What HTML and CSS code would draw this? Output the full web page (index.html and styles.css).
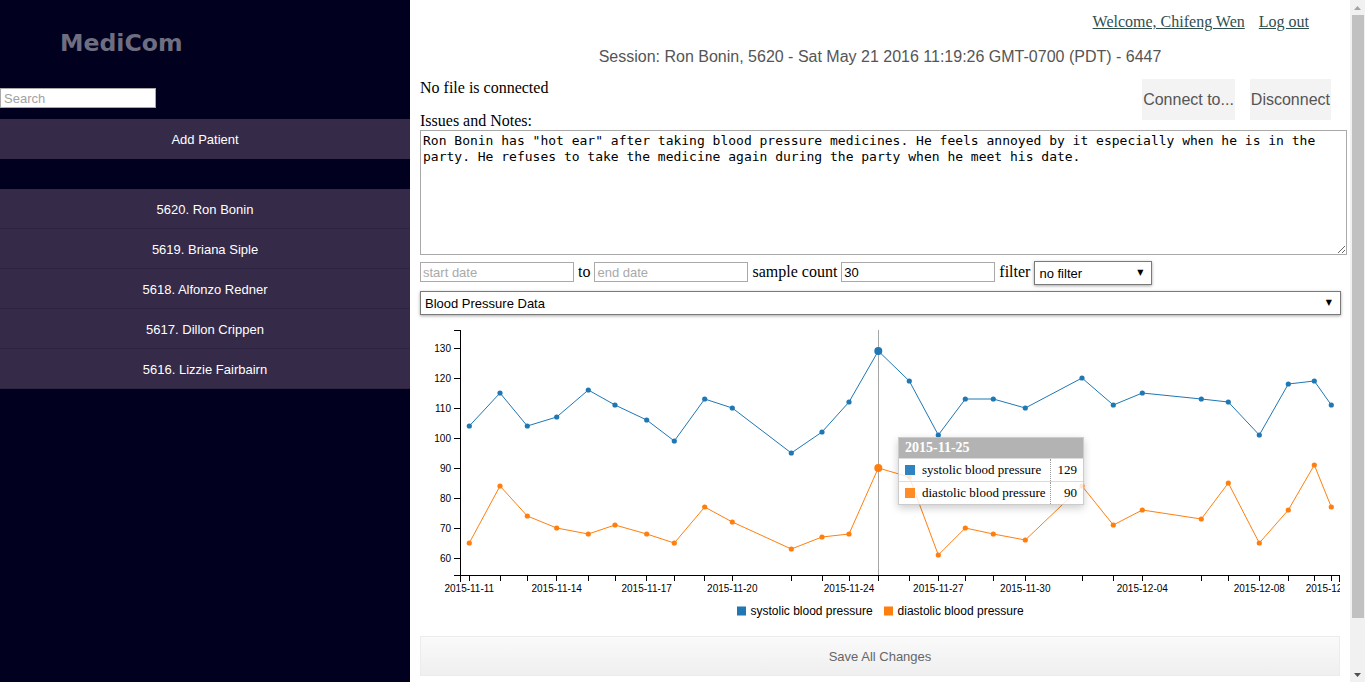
FILE: index.html
```html
<!DOCTYPE html>
<html lang="en">
<head>
<meta charset="utf-8">
<title>MediCom</title>
<link rel="stylesheet" href="styles.css">
</head>
<body>
<div class="app">
  <aside class="sidebar">
    <div class="brand">MediCom</div>
    <input class="search" type="text" placeholder="Search">
    <div class="add-patient">Add Patient</div>
    <ul class="patients">
      <li>5620. Ron Bonin</li>
      <li>5619. Briana Siple</li>
      <li>5618. Alfonzo Redner</li>
      <li>5617. Dillon Crippen</li>
      <li>5616. Lizzie Fairbairn</li>
    </ul>
  </aside>

  <main class="main">
    <div class="topbar">
      <a href="#" class="toplink">Welcome, Chifeng Wen</a><a href="#" class="toplink">Log out</a>
    </div>
    <div class="session">Session: Ron Bonin, 5620 - Sat May 21 2016 11:19:26 GMT-0700 (PDT) - 6447</div>

    <div class="file-row">
      <div class="file-actions">
        <button class="file-btn">Connect to...</button>
        <button class="file-btn">Disconnect</button>
      </div>
      <div class="file-status">No file is connected</div>
    </div>
    <div class="notes-label">Issues and Notes:</div>
    <textarea class="notes">Ron Bonin has "hot ear" after taking blood pressure medicines. He feels annoyed by it especially when he is in the party. He refuses to take the medicine again during the party when he meet his date.</textarea>

    <div class="filters">
      <input class="field" type="text" placeholder="start date">
      <span class="filter-text">to</span>
      <input class="field" type="text" placeholder="end date">
      <span class="filter-text">sample count</span>
      <input class="field" type="text" value="30">
      <span class="filter-text">filter</span>
      <span class="select select-small"><select><option>no filter</option></select></span>
    </div>

    <div class="dataset">
      <span class="select select-wide"><select><option>Blood Pressure Data</option></select></span>
    </div>

    <div class="chart">
      <svg class="chart-svg" width="920" height="300" viewBox="0 0 920 300">
        <g class="axis" stroke="#000" fill="none" shape-rendering="crispEdges">
          <path d="M34,10.5H40.5V255.5H34"/>
          <path d="M34,28.5H40 M34,58.5H40 M34,88.5H40 M34,118.5H40 M34,148.5H40 M34,178.5H40 M34,208.5H40 M34,238.5H40"/>
          <path d="M40.5,261.5V255.5H919.5V261.5"/>
          <path d="M49.5,255V261 M80.5,255V261 M107.5,255V261 M136.5,255V261 M168.5,255V261 M195.5,255V261 M226.5,255V261 M254.5,255V261 M284.5,255V261 M312.5,255V261 M371.5,255V261 M402.5,255V261 M429.5,255V261 M458.5,255V261 M489.5,255V261 M518.5,255V261 M545.5,255V261 M573.5,255V261 M605.5,255V261 M662.5,255V261 M693.5,255V261 M722.5,255V261 M781.5,255V261 M808.5,255V261 M839.5,255V261 M868.5,255V261 M894.5,255V261 M911.5,255V261"/>
        </g>
        <g class="tick-text" text-anchor="end">
          <text x="31" y="31.7">130</text>
          <text x="31" y="61.7">120</text>
          <text x="31" y="91.7">110</text>
          <text x="31" y="121.7">100</text>
          <text x="31" y="151.7">90</text>
          <text x="31" y="181.7">80</text>
          <text x="31" y="211.7">70</text>
          <text x="31" y="241.7">60</text>
        </g>
        <g class="tick-text" text-anchor="middle">
          <text x="49.3" y="272">2015-11-11</text>
          <text x="136.7" y="272">2015-11-14</text>
          <text x="226.7" y="272">2015-11-17</text>
          <text x="312.3" y="272">2015-11-20</text>
          <text x="429" y="272">2015-11-24</text>
          <text x="518.3" y="272">2015-11-27</text>
          <text x="605.3" y="272">2015-11-30</text>
          <text x="722.3" y="272">2015-12-04</text>
          <text x="839.3" y="272">2015-12-08</text>
          <text x="911.3" y="272">2015-12-10</text>
        </g>

        <line x1="458.5" y1="10" x2="458.5" y2="255" stroke="#a6a6a6" stroke-width="1" shape-rendering="crispEdges"/>

        <polyline fill="none" stroke="#1f77b4" stroke-width="1" points="49.3,106 80,73 107.3,106 136.7,97 168.3,70 195,85 226.7,100 254.3,121 284.7,79 312.3,88 371.3,133 402,112 429,82 458.3,31 489.3,61 518.3,115 545.3,79 573.3,79 605.3,88 662,58 693.3,85 722.3,73 781.3,79 808.3,82 839.3,115 868.3,64 894.3,61 911.3,85"/>
        <polyline fill="none" stroke="#ff7f0e" stroke-width="1" points="49.3,223 80,166 107.3,196 136.7,208 168.3,214 195,205 226.7,214 254.3,223 284.7,187 312.3,202 371.3,229 402,217 429,214 458.3,148 489.3,157 518.3,235 545.3,208 573.3,214 605.3,220 662,166 693.3,205 722.3,190 781.3,199 808.3,163 839.3,223 868.3,190 894.3,145 911.3,187"/>

        <g fill="#1f77b4">
          <circle cx="49.3" cy="106" r="2.6"/><circle cx="80" cy="73" r="2.6"/><circle cx="107.3" cy="106" r="2.6"/><circle cx="136.7" cy="97" r="2.6"/><circle cx="168.3" cy="70" r="2.6"/><circle cx="195" cy="85" r="2.6"/><circle cx="226.7" cy="100" r="2.6"/><circle cx="254.3" cy="121" r="2.6"/><circle cx="284.7" cy="79" r="2.6"/><circle cx="312.3" cy="88" r="2.6"/><circle cx="371.3" cy="133" r="2.6"/><circle cx="402" cy="112" r="2.6"/><circle cx="429" cy="82" r="2.6"/><circle cx="458.3" cy="31" r="4"/><circle cx="489.3" cy="61" r="2.6"/><circle cx="518.3" cy="115" r="2.6"/><circle cx="545.3" cy="79" r="2.6"/><circle cx="573.3" cy="79" r="2.6"/><circle cx="605.3" cy="88" r="2.6"/><circle cx="662" cy="58" r="2.6"/><circle cx="693.3" cy="85" r="2.6"/><circle cx="722.3" cy="73" r="2.6"/><circle cx="781.3" cy="79" r="2.6"/><circle cx="808.3" cy="82" r="2.6"/><circle cx="839.3" cy="115" r="2.6"/><circle cx="868.3" cy="64" r="2.6"/><circle cx="894.3" cy="61" r="2.6"/><circle cx="911.3" cy="85" r="2.6"/>
        </g>
        <g fill="#ff7f0e">
          <circle cx="49.3" cy="223" r="2.6"/><circle cx="80" cy="166" r="2.6"/><circle cx="107.3" cy="196" r="2.6"/><circle cx="136.7" cy="208" r="2.6"/><circle cx="168.3" cy="214" r="2.6"/><circle cx="195" cy="205" r="2.6"/><circle cx="226.7" cy="214" r="2.6"/><circle cx="254.3" cy="223" r="2.6"/><circle cx="284.7" cy="187" r="2.6"/><circle cx="312.3" cy="202" r="2.6"/><circle cx="371.3" cy="229" r="2.6"/><circle cx="402" cy="217" r="2.6"/><circle cx="429" cy="214" r="2.6"/><circle cx="458.3" cy="148" r="4"/><circle cx="489.3" cy="157" r="2.6"/><circle cx="518.3" cy="235" r="2.6"/><circle cx="545.3" cy="208" r="2.6"/><circle cx="573.3" cy="214" r="2.6"/><circle cx="605.3" cy="220" r="2.6"/><circle cx="662" cy="166" r="2.6"/><circle cx="693.3" cy="205" r="2.6"/><circle cx="722.3" cy="190" r="2.6"/><circle cx="781.3" cy="199" r="2.6"/><circle cx="808.3" cy="163" r="2.6"/><circle cx="839.3" cy="223" r="2.6"/><circle cx="868.3" cy="190" r="2.6"/><circle cx="894.3" cy="145" r="2.6"/><circle cx="911.3" cy="187" r="2.6"/>
        </g>

        <g class="legend">
          <rect x="317" y="286.5" width="9" height="9" fill="#1f77b4"/>
          <text x="330.5" y="295.3">systolic blood pressure</text>
          <rect x="464" y="286.5" width="9" height="9" fill="#ff7f0e"/>
          <text x="477.6" y="295.3">diastolic blood pressure</text>
        </g>
      </svg>

      <div class="tooltip">
        <div class="tt-head">2015-11-25</div>
        <table class="tt-table">
          <tr><td class="tt-key"><span class="swatch swatch-blue"></span>systolic blood pressure</td><td class="tt-val">129</td></tr>
          <tr><td class="tt-key"><span class="swatch swatch-orange"></span>diastolic blood pressure</td><td class="tt-val">90</td></tr>
        </table>
      </div>
    </div>

    <button class="save">Save All Changes</button>
  </main>

  <div class="scrollbar">
    <div class="sb-btn"><svg width="7" height="4" viewBox="0 0 7 4"><path d="M0,4L3.5,0L7,4Z" fill="#a3a3a3"/></svg></div>
    <div class="sb-track"><div class="sb-thumb"></div></div>
    <div class="sb-btn"><svg width="7" height="4" viewBox="0 0 7 4"><path d="M0,0L3.5,4L7,0Z" fill="#505050"/></svg></div>
  </div>
</div>
</body>
</html>
```
FILE: styles.css
```css
html, body {
  margin: 0;
  padding: 0;
  height: 100%;
  overflow: hidden;
}

body {
  font-family: "Liberation Serif", "Times New Roman", serif;
  font-size: 16px;
  color: #000;
  background: #fff;
}

.app {
  display: flex;
  height: 682px;
}

/* ---------- Sidebar ---------- */
.sidebar {
  width: 410px;
  flex: none;
  background: #01001f;
}

.brand {
  margin: 30px 0 0 60px;
  font-family: "DejaVu Sans", sans-serif;
  font-weight: bold;
  font-size: 23.6px;
  line-height: 27px;
  color: #6e6e80;
}

.search {
  display: block;
  margin: 31px 0 0;
  width: 156px;
  height: 20px;
  box-sizing: border-box;
  border: 1px solid #a9a9a9;
  padding: 0 3px;
  font-family: "Liberation Sans", Arial, sans-serif;
  font-size: 13px;
  color: #000;
  background: #fff;
  outline: none;
}

.search::placeholder {
  color: #a2a2a2;
}

.add-patient {
  margin-top: 11px;
  height: 38px;
  padding-top: 2px;
  line-height: 38px;
  text-align: center;
  background: #352a48;
  color: #fff;
  font-family: "Liberation Sans", Arial, sans-serif;
  font-size: 13px;
}

.patients {
  list-style: none;
  margin: 30px 0 0;
  padding: 0;
}

.patients li {
  height: 37px;
  padding-top: 2px;
  line-height: 37px;
  border-bottom: 1px solid #2c2440;
  background: #352a48;
  color: #fff;
  text-align: center;
  font-family: "Liberation Sans", Arial, sans-serif;
  font-size: 13px;
}

/* ---------- Main ---------- */
.main {
  flex: 1;
  min-width: 0;
  padding: 0 10px;
  box-sizing: border-box;
}

.topbar {
  padding: 13px 31px 0 0;
  text-align: right;
  line-height: 18px;
}

.toplink {
  color: #2f4f4f;
  text-decoration: underline;
}

.toplink + .toplink {
  margin-left: 14px;
}

.session {
  margin-top: 16px;
  text-align: center;
  font-family: "Liberation Sans", Arial, sans-serif;
  font-size: 16px;
  line-height: 19px;
  color: #555;
}

.file-row {
  margin-top: 13px;
}

.file-actions {
  float: right;
  display: flex;
  gap: 15px;
  margin-right: 9px;
}

.file-btn {
  height: 41px;
  padding: 0 1px;
  border: none;
  background: #f3f3f3;
  color: #555;
  font-family: "Liberation Sans", Arial, sans-serif;
  font-size: 16px;
}

.file-status {
  line-height: 18px;
  margin-bottom: 15px;
}

.notes-label {
  line-height: 18px;
}

.notes {
  display: block;
  margin: 0;
  width: 927px;
  height: 125px;
  box-sizing: border-box;
  border: 1px solid #a9a9a9;
  padding: 2px;
  font-family: "DejaVu Sans Mono", "Liberation Mono", monospace;
  font-size: 13px;
  line-height: 16px;
  color: #000;
  resize: both;
}

.filters {
  margin-top: 6px;
  display: flex;
  align-items: flex-start;
  gap: 4px;
}

.filter-text {
  line-height: 21px;
}

.field {
  width: 154px;
  height: 20px;
  box-sizing: border-box;
  border: 1px solid #a9a9a9;
  padding: 0 2px;
  margin: 1px 0 0;
  font-family: "Liberation Sans", Arial, sans-serif;
  font-size: 13px;
  color: #000;
}

.field::placeholder {
  color: #a9a9a9;
}

.select {
  position: relative;
  display: inline-block;
}

.select select {
  appearance: none;
  -webkit-appearance: none;
  display: block;
  height: 24px;
  box-sizing: border-box;
  margin: 0;
  border: 1px solid #7a7a7a;
  border-radius: 0;
  padding: 0 4px;
  background: #fff;
  box-shadow: 0 1px 3px rgba(0, 0, 0, 0.35);
  font-family: "Liberation Sans", Arial, sans-serif;
  font-size: 13px;
  color: #000;
}

.select::after {
  content: "\25BC";
  position: absolute;
  right: 9px;
  top: 7px;
  font-family: "DejaVu Sans", sans-serif;
  font-size: 8px;
  line-height: 9px;
  color: #000;
  pointer-events: none;
}

.select-small select {
  width: 118px;
}

.dataset {
  margin-top: 6px;
}

.select-wide select {
  width: 921px;
}

/* ---------- Chart ---------- */
.chart {
  position: relative;
  margin-top: 5px;
  height: 300px;
}

.chart-svg {
  display: block;
  overflow: hidden;
}

.tick-text text {
  font-family: "Liberation Sans", Arial, sans-serif;
  font-size: 10px;
  fill: #000;
}

.legend text {
  font-family: "Liberation Sans", Arial, sans-serif;
  font-size: 12px;
  fill: #000;
}

.tooltip {
  position: absolute;
  left: 478px;
  top: 117px;
  width: 186px;
  box-sizing: border-box;
  border: 1px solid rgba(0, 0, 0, 0.2);
  background: rgba(255, 255, 255, 0.82);
  box-shadow: 0 3px 8px rgba(0, 0, 0, 0.2);
  font-family: "Liberation Serif", serif;
}

.tt-head {
  height: 20px;
  line-height: 20px;
  padding-left: 6px;
  background: #b3b3b3;
  color: #fff;
  font-weight: bold;
  font-size: 14px;
}

.tt-table {
  width: 100%;
  border-collapse: collapse;
  font-size: 13px;
}

.tt-table td {
  height: 22px;
  padding: 0;
  border-top: 1px solid #dcdcdc;
  vertical-align: middle;
}

.tt-key {
  padding-left: 6px !important;
  white-space: nowrap;
}

.swatch {
  display: inline-block;
  width: 10px;
  height: 10px;
  margin-right: 7px;
  vertical-align: -1px;
}

.swatch-blue {
  background: #2f83c0;
}

.swatch-orange {
  background: #ff8c26;
}

.tt-val {
  width: 26px;
  text-align: right;
  padding-right: 6px !important;
  border-left: 1px dotted #999;
}

/* ---------- Save ---------- */
.save {
  display: block;
  margin-top: 16px;
  width: 920px;
  height: 40px;
  border: 1px solid #ececec;
  background: linear-gradient(#fafafa, #efefef);
  color: #666;
  font-family: "Liberation Sans", Arial, sans-serif;
  font-size: 13px;
}

/* ---------- Scrollbar ---------- */
.scrollbar {
  width: 15px;
  flex: none;
  display: flex;
  flex-direction: column;
  background: #f1f1f1;
}

.sb-btn {
  height: 15px;
  flex: none;
  display: flex;
  align-items: center;
  justify-content: center;
}

.sb-track {
  flex: 1;
}

.sb-thumb {
  height: 603px;
  margin: 0 1px 0 2px;
  background: #c1c1c1;
}
```
